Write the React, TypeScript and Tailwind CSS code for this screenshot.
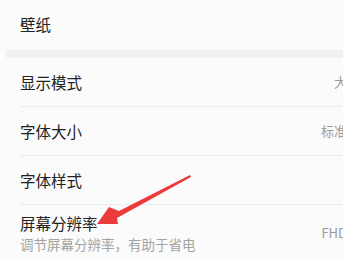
const font = { fontFamily: '"Noto Sans CJK SC", "Noto Sans", sans-serif' };

function Row({ title, value, sub, last }: { title: string; value?: string; sub?: string; last?: boolean }) {
  return (
    <div className={`ml-[20px] flex items-center justify-between pr-[23px] ${last ? "" : "border-b border-[#ececec]"} ${sub ? "h-[56px]" : "h-[49px]"}`}>
      <div className="flex flex-col">
        <span className="text-[15.5px] leading-[20px] text-[#222]">{title}</span>
        {sub && <span className="mt-[3px] text-[13.5px] leading-[17px] text-[#a3a3a3]">{sub}</span>}
      </div>
      {value && <span className="text-[13px] text-[#9a9a9a]">{value}</span>}
    </div>
  );
}

export default function App() {
  return (
    <div className="relative h-[259px] w-[343px] overflow-hidden bg-[#fbfbfb]" style={font}>
      <div className="w-[370px]">
        <div className="flex h-[50px] items-center pl-[20px]">
          <span className="text-[15.5px] text-[#222]">壁纸</span>
        </div>
        <div className="ml-[6px] h-[8px] bg-[#f1f1f1]" />
        <Row title="显示模式" value="大" />
        <Row title="字体大小" value="标准" />
        <Row title="字体样式" />
        <Row title="屏幕分辨率" sub="调节屏幕分辨率，有助于省电" value="FHD" last />
      </div>
      <svg className="absolute left-0 top-0" width="343" height="259" viewBox="0 0 343 259">
        <polygon points="190,175 119,211 109,207 97,224 118,224 117,218 191,177" fill="#ec3b3b" />
      </svg>
    </div>
  );
}
